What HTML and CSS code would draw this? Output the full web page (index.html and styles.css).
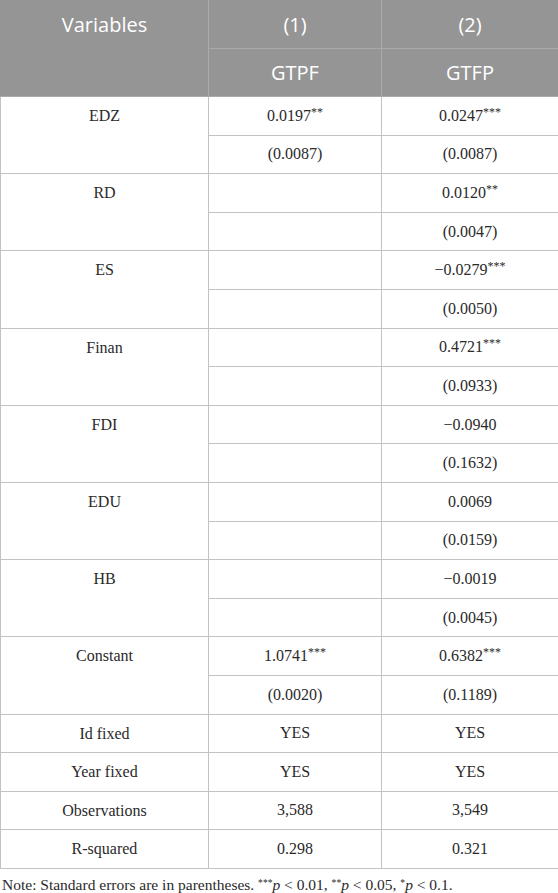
FILE: index.html
```html
<!DOCTYPE html>
<html lang="en">
<head>
<meta charset="utf-8">
<title>Regression table</title>
<link rel="stylesheet" href="styles.css">
</head>
<body>
<table class="results">
  <colgroup>
    <col class="c-var">
    <col class="c-one">
    <col class="c-two">
  </colgroup>
  <thead>
    <tr class="head-row">
      <th rowspan="2" class="head-var">Variables</th>
      <th class="head-cell">(1)</th>
      <th class="head-cell">(2)</th>
    </tr>
    <tr class="head-row">
      <th class="head-cell">GTPF</th>
      <th class="head-cell">GTFP</th>
    </tr>
  </thead>
  <tbody>
    <tr><td rowspan="2" class="var">EDZ</td><td>0.0197<sup>**</sup></td><td>0.0247<sup>***</sup></td></tr>
    <tr><td>(0.0087)</td><td>(0.0087)</td></tr>
    <tr><td rowspan="2" class="var">RD</td><td></td><td>0.0120<sup>**</sup></td></tr>
    <tr><td></td><td>(0.0047)</td></tr>
    <tr><td rowspan="2" class="var">ES</td><td></td><td>−0.0279<sup>***</sup></td></tr>
    <tr><td></td><td>(0.0050)</td></tr>
    <tr><td rowspan="2" class="var">Finan</td><td></td><td>0.4721<sup>***</sup></td></tr>
    <tr><td></td><td>(0.0933)</td></tr>
    <tr><td rowspan="2" class="var">FDI</td><td></td><td>−0.0940</td></tr>
    <tr><td></td><td>(0.1632)</td></tr>
    <tr><td rowspan="2" class="var">EDU</td><td></td><td>0.0069</td></tr>
    <tr><td></td><td>(0.0159)</td></tr>
    <tr><td rowspan="2" class="var">HB</td><td></td><td>−0.0019</td></tr>
    <tr><td></td><td>(0.0045)</td></tr>
    <tr><td rowspan="2" class="var">Constant</td><td>1.0741<sup>***</sup></td><td>0.6382<sup>***</sup></td></tr>
    <tr><td>(0.0020)</td><td>(0.1189)</td></tr>
    <tr><td class="var">Id fixed</td><td>YES</td><td>YES</td></tr>
    <tr><td class="var">Year fixed</td><td>YES</td><td>YES</td></tr>
    <tr><td class="var">Observations</td><td>3,588</td><td>3,549</td></tr>
    <tr><td class="var">R-squared</td><td>0.298</td><td>0.321</td></tr>
  </tbody>
</table>
<p class="note">Note: Standard errors are in parentheses. <sup>***</sup><i>p</i> &lt; 0.01, <sup>**</sup><i>p</i> &lt; 0.05, <sup>*</sup><i>p</i> &lt; 0.1.</p>
</body>
</html>
```

FILE: styles.css
```css
html, body {
  margin: 0;
  padding: 0;
  background: #ffffff;
}

.results {
  border-collapse: collapse;
  table-layout: fixed;
  width: 558px;
  font-family: "Liberation Serif", "Times New Roman", serif;
  font-size: 16px;
  color: #2a2a2a;
}

.c-var { width: 208px; }
.c-one { width: 173px; }
.c-two { width: 177px; }

.head-row {
  height: 48px;
}

.head-row th {
  background: #959595;
  color: #ffffff;
  font-family: "Open Sans", "Noto Sans", sans-serif;
  font-weight: 400;
  font-size: 20px;
  text-align: center;
  padding: 0;
  border: 1px solid #aaaaaa;
  border-top: 1px solid #959595;
}

.head-row .head-var {
  vertical-align: top;
  line-height: 48px;
  border-left: 1px solid #959595;
}

.head-row th:last-child {
  border-right: 1px solid #959595;
}

tbody tr {
  height: 38.6px;
}

tbody td {
  border: 1px solid #c2c2c2;
  text-align: center;
  vertical-align: middle;
  padding: 0;
  line-height: 20px;
}

tbody td.var {
  vertical-align: top;
  padding-top: 9px;
}

sup {
  font-size: 0.75em;
  line-height: 0;
  vertical-align: 0.38em;
}

.note {
  margin: 7px 0 0 2px;
  font-family: "Liberation Serif", "Times New Roman", serif;
  font-size: 15.5px;
  color: #2a2a2a;
}

.note sup {
  font-size: 0.62em;
  vertical-align: 0.45em;
}
```
